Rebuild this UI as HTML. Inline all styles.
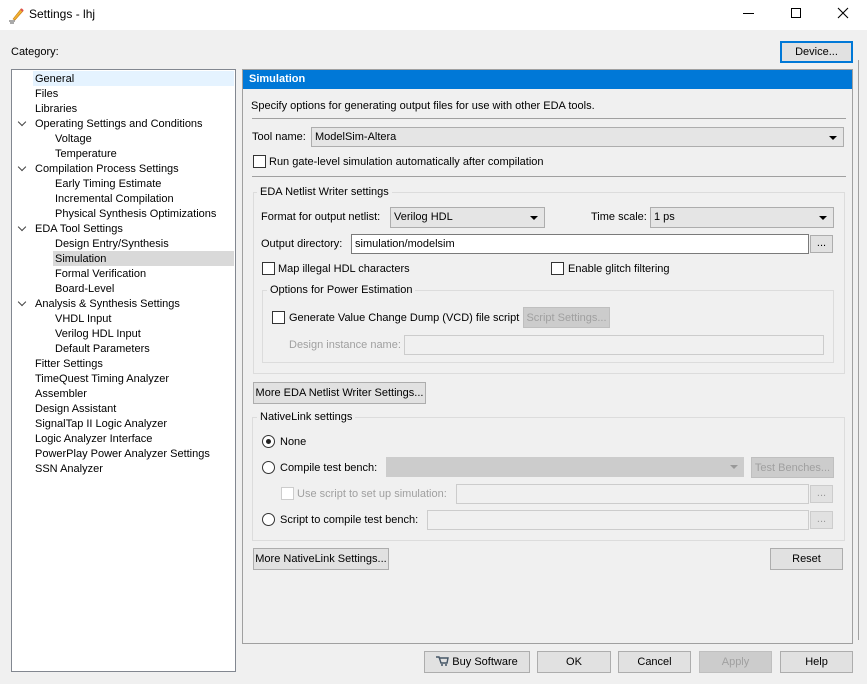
<!DOCTYPE html>
<html><head><style>
*{box-sizing:border-box;margin:0;padding:0}
body{width:867px;height:684px;background:#f0f0f0;font-family:"Liberation Sans",Tahoma,sans-serif;font-size:11px;color:#000;position:relative;overflow:hidden}
.a{position:absolute;white-space:nowrap}
.t{position:absolute;white-space:nowrap;line-height:13px}
.btn{position:absolute;background:#e1e1e1;border:1px solid #adadad;text-align:center;line-height:20px;font-size:11px;white-space:nowrap}
.dis{color:#a0a0a0;background:#cccccc;border-color:#bfbfbf}
.cb{position:absolute;width:13px;height:13px;border:1px solid #333;background:#fff}
.rb{position:absolute;width:13px;height:13px;border:1px solid #333;border-radius:50%;background:#fff}
.inp{position:absolute;background:#fff;border:1px solid #7a7a7a;padding-left:3px;line-height:18px}
.combo{position:absolute;background:#e5e5e5;border:1px solid #adadad;padding-left:3px;line-height:19px}
.combo:after{content:"";position:absolute;right:6px;top:8px;border-left:4px solid transparent;border-right:4px solid transparent;border-top:4px solid #000}
.grp{position:absolute;border:1px solid #dcdcdc}
.gl{position:absolute;background:#f0f0f0;padding:0 3px;line-height:13px;white-space:nowrap}
.tr{position:absolute;line-height:15px;height:15px;white-space:nowrap}
.chev{position:absolute;left:19px;width:6px;height:6px;border-right:1.5px solid #444;border-bottom:1.5px solid #444;transform:rotate(45deg)}
</style></head><body>
<div class="a" style="left:0;top:0;width:867px;height:30px;background:#fff"></div>
<svg class="a" style="left:8px;top:6px" width="18" height="18" viewBox="0 0 18 18"><path d="M5 13 L13 3 L15 5 L7 14 Z" fill="#f2b233" stroke="#c47a10" stroke-width=".6"/><path d="M13 3 L15 5" stroke="#e05050" stroke-width="2"/><path d="M1 15h6M2 17h4" stroke="#555"/></svg>
<div class="a" style="left:29px;top:6px;font-size:12px;line-height:16px">Settings - lhj</div>
<div class="a" style="left:743px;top:13px;width:11px;height:1px;background:#000"></div>
<div class="a" style="left:791px;top:8px;width:10px;height:10px;border:1px solid #000"></div>
<svg class="a" style="left:837px;top:7px" width="12" height="12"><path d="M1 1L11 11M11 1L1 11" stroke="#000" stroke-width="1.1"/></svg>
<div class="t" style="left:11px;top:46px">Category:</div>
<div class="btn" style="left:780px;top:41px;width:73px;height:22px;border:2px solid #0078d7;line-height:18px">Device...</div>

<div class="a" style="left:11px;top:69px;width:225px;height:603px;background:#fff;border:1px solid #828790"></div>
<div class="a" style="left:33px;top:71px;width:201px;height:15px;background:#e5f3ff"></div>
<div class="a" style="left:53px;top:251px;width:181px;height:15px;background:#d9d9d9"></div>
<div style="position:absolute;left:0;top:72px;width:236px">
<div class="tr" style="top:0;left:35px">General</div>
<div class="tr" style="top:15px;left:35px">Files</div>
<div class="tr" style="top:30px;left:35px">Libraries</div>
<div class="chev" style="top:47px"></div><div class="tr" style="top:45px;left:35px">Operating Settings and Conditions</div>
<div class="tr" style="top:60px;left:55px">Voltage</div>
<div class="tr" style="top:75px;left:55px">Temperature</div>
<div class="chev" style="top:92px"></div><div class="tr" style="top:90px;left:35px">Compilation Process Settings</div>
<div class="tr" style="top:105px;left:55px">Early Timing Estimate</div>
<div class="tr" style="top:120px;left:55px">Incremental Compilation</div>
<div class="tr" style="top:135px;left:55px">Physical Synthesis Optimizations</div>
<div class="chev" style="top:152px"></div><div class="tr" style="top:150px;left:35px">EDA Tool Settings</div>
<div class="tr" style="top:165px;left:55px">Design Entry/Synthesis</div>
<div class="tr" style="top:180px;left:55px">Simulation</div>
<div class="tr" style="top:195px;left:55px">Formal Verification</div>
<div class="tr" style="top:210px;left:55px">Board-Level</div>
<div class="chev" style="top:227px"></div><div class="tr" style="top:225px;left:35px">Analysis &amp; Synthesis Settings</div>
<div class="tr" style="top:240px;left:55px">VHDL Input</div>
<div class="tr" style="top:255px;left:55px">Verilog HDL Input</div>
<div class="tr" style="top:270px;left:55px">Default Parameters</div>
<div class="tr" style="top:285px;left:35px">Fitter Settings</div>
<div class="tr" style="top:300px;left:35px">TimeQuest Timing Analyzer</div>
<div class="tr" style="top:315px;left:35px">Assembler</div>
<div class="tr" style="top:330px;left:35px">Design Assistant</div>
<div class="tr" style="top:345px;left:35px">SignalTap II Logic Analyzer</div>
<div class="tr" style="top:360px;left:35px">Logic Analyzer Interface</div>
<div class="tr" style="top:375px;left:35px">PowerPlay Power Analyzer Settings</div>
<div class="tr" style="top:390px;left:35px">SSN Analyzer</div>
</div>

<div class="a" style="left:242px;top:69px;width:611px;height:575px;border:1px solid #a0a0a0"></div>
<div class="a" style="left:858px;top:60px;width:1px;height:580px;background:#a0a0a0"></div>
<div class="a" style="left:243px;top:70px;width:609px;height:19px;background:#0078d7;color:#fff;font-weight:bold;line-height:19px;padding-left:6px">Simulation</div>
<div class="t" style="left:251px;top:100px">Specify options for generating output files for use with other EDA tools.</div>
<div class="a" style="left:252px;top:118px;width:594px;height:1px;background:#a0a0a0"></div>
<div class="t" style="left:252px;top:131px">Tool name:</div>
<div class="combo" style="left:311px;top:127px;width:533px;height:20px">ModelSim-Altera</div>
<div class="cb" style="left:253px;top:155px"></div>
<div class="t" style="left:269px;top:156px">Run gate-level simulation automatically after compilation</div>
<div class="a" style="left:252px;top:176px;width:594px;height:1px;background:#a0a0a0"></div>

<div class="grp" style="left:253px;top:192px;width:592px;height:182px"></div>
<div class="gl" style="left:257px;top:186px">EDA Netlist Writer settings</div>
<div class="t" style="left:261px;top:211px">Format for output netlist:</div>
<div class="combo" style="left:390px;top:207px;width:155px;height:21px">Verilog HDL</div>
<div class="t" style="left:591px;top:211px">Time scale:</div>
<div class="combo" style="left:650px;top:207px;width:184px;height:21px">1 ps</div>
<div class="t" style="left:261px;top:238px">Output directory:</div>
<div class="inp" style="left:351px;top:234px;width:458px;height:20px">simulation/modelsim</div>
<div class="btn" style="left:810px;top:235px;width:23px;height:18px;line-height:14px">...</div>
<div class="cb" style="left:262px;top:262px"></div>
<div class="t" style="left:278px;top:263px">Map illegal HDL characters</div>
<div class="cb" style="left:551px;top:262px"></div>
<div class="t" style="left:568px;top:263px">Enable glitch filtering</div>
<div class="grp" style="left:262px;top:290px;width:572px;height:73px"></div>
<div class="gl" style="left:267px;top:284px">Options for Power Estimation</div>
<div class="cb" style="left:272px;top:311px"></div>
<div class="t" style="left:289px;top:312px">Generate Value Change Dump (VCD) file script</div>
<div class="btn dis" style="left:523px;top:307px;width:87px;height:21px">Script Settings...</div>
<div class="t" style="left:289px;top:339px;color:#a0a0a0">Design instance name:</div>
<div class="a" style="left:404px;top:335px;width:420px;height:20px;border:1px solid #ccc;background:#f0f0f0"></div>

<div class="btn" style="left:253px;top:382px;width:173px;height:22px">More EDA Netlist Writer Settings...</div>
<div class="grp" style="left:252px;top:417px;width:593px;height:124px"></div>
<div class="gl" style="left:257px;top:411px">NativeLink settings</div>
<div class="rb" style="left:262px;top:435px"></div><div class="a" style="left:266px;top:439px;width:5px;height:5px;border-radius:50%;background:#222"></div>
<div class="t" style="left:280px;top:436px">None</div>
<div class="rb" style="left:262px;top:461px"></div>
<div class="t" style="left:280px;top:462px">Compile test bench:</div>
<div class="a" style="left:386px;top:457px;width:358px;height:20px;background:#ccc;border:1px solid #ccc"></div>
<div class="a" style="left:730px;top:465px;border-left:4px solid transparent;border-right:4px solid transparent;border-top:4px solid #999"></div>
<div class="btn dis" style="left:751px;top:457px;width:83px;height:21px">Test Benches...</div>
<div class="cb" style="left:281px;top:487px;border-color:#ccc"></div>
<div class="t" style="left:297px;top:488px;color:#a0a0a0">Use script to set up simulation:</div>
<div class="a" style="left:456px;top:484px;width:353px;height:20px;border:1px solid #ccc"></div>
<div class="btn" style="left:810px;top:485px;width:23px;height:18px;line-height:14px;color:#999;border-color:#ccc">...</div>
<div class="rb" style="left:262px;top:513px"></div>
<div class="t" style="left:280px;top:514px">Script to compile test bench:</div>
<div class="a" style="left:427px;top:510px;width:382px;height:20px;border:1px solid #ccc"></div>
<div class="btn" style="left:810px;top:511px;width:23px;height:18px;line-height:14px;color:#999;border-color:#ccc">...</div>
<div class="btn" style="left:253px;top:548px;width:136px;height:22px">More NativeLink Settings...</div>
<div class="btn" style="left:770px;top:548px;width:73px;height:22px">Reset</div>

<div class="btn" style="left:424px;top:651px;width:106px;height:22px"><svg width="13" height="10" style="vertical-align:-1px"><path d="M0 1h3l2 6h6l1-5H4" fill="none" stroke="#456" stroke-width="1.4"/><circle cx="6" cy="9" r="1" fill="#456"/><circle cx="10" cy="9" r="1" fill="#456"/></svg> Buy Software</div>
<div class="btn" style="left:537px;top:651px;width:74px;height:22px">OK</div>
<div class="btn" style="left:618px;top:651px;width:73px;height:22px">Cancel</div>
<div class="btn dis" style="left:699px;top:651px;width:73px;height:22px">Apply</div>
<div class="btn" style="left:780px;top:651px;width:73px;height:22px">Help</div>
</body></html>
